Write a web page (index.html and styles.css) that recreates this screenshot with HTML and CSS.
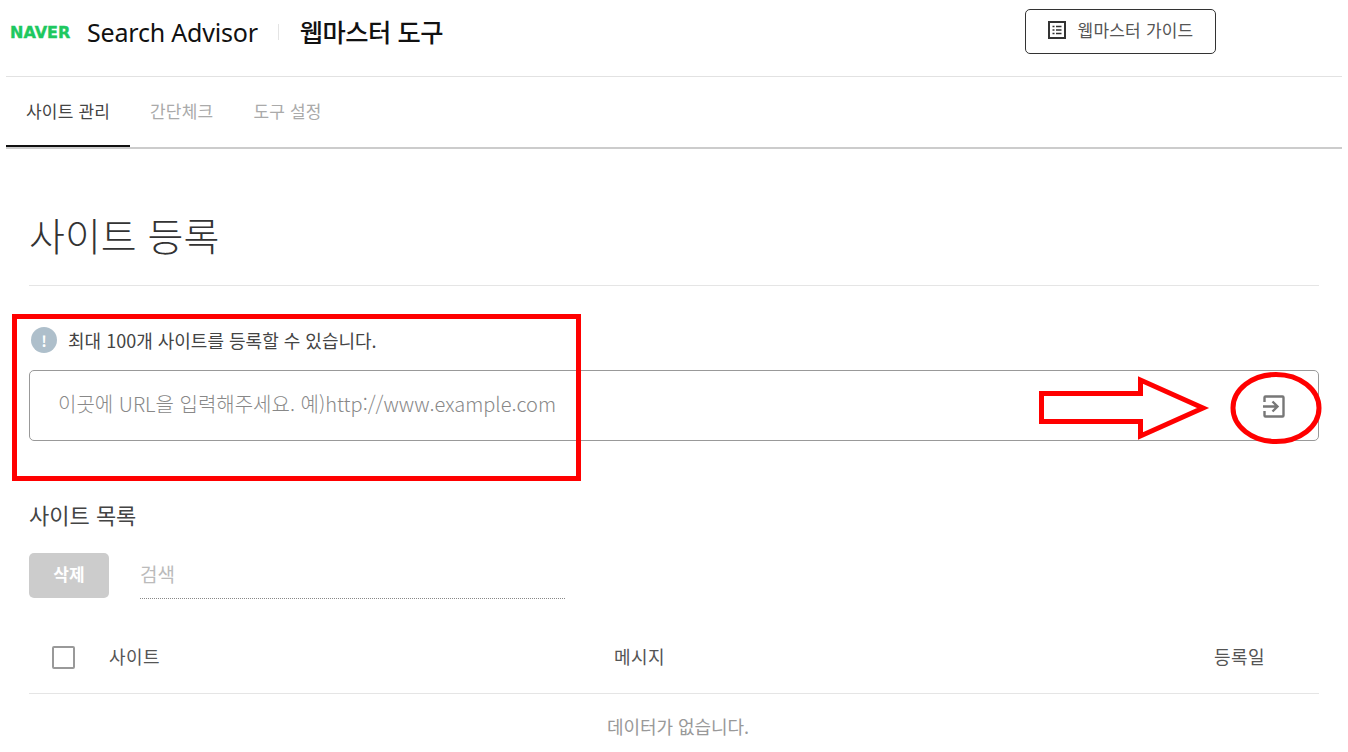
FILE: index.html
```html
<!DOCTYPE html>
<html lang="ko">
<head>
  <meta charset="UTF-8">
  <title>웹마스터 도구</title>
  <link rel="stylesheet" href="styles.css">
</head>
<body>
  <header class="top">
    <div class="brand">
      <span class="naver">NAVER</span>
      <span class="advisor">Search Advisor</span>
      <span class="divider"></span>
      <span class="tool">웹마스터 도구</span>
    </div>
    <a class="guide">
      <svg class="guide-icon" width="18" height="18" viewBox="0 0 18 18">
        <rect x="1" y="1" width="16" height="16" fill="none" stroke="#333" stroke-width="2"/>
        <path d="M4.500 5.500h2M8 5.500h5.500M4.500 9h2M8 9h5.500M4.500 12.500h2M8 12.500h5.500" stroke="#333" stroke-width="1.500"/>
      </svg>
      웹마스터 가이드
    </a>
  </header>

  <nav class="tabs">
    <a class="tab active">사이트 관리</a>
    <a class="tab">간단체크</a>
    <a class="tab">도구 설정</a>
  </nav>

  <main class="content">
    <h1 class="page-title">사이트 등록</h1>

    <p class="notice">
      <span class="notice-icon">!</span>
      최대 100개 사이트를 등록할 수 있습니다.
    </p>

    <div class="url-box">
      <span class="url-hint">이곳에 URL을 입력해주세요. 예)http://www.example.com</span>
      <svg class="url-go" width="24" height="24" viewBox="0 0 24 24">
        <path d="M2.500 7V2.500a1 1 0 0 1 1-1h17a1 1 0 0 1 1 1v18a1 1 0 0 1-1 1h-17a1 1 0 0 1-1-1V16" fill="none" stroke="#777" stroke-width="2.400"/>
        <path d="M1 11.500h14M10.500 6.500l5 5-5 5" fill="none" stroke="#777" stroke-width="2.400"/>
      </svg>
    </div>

    <h2 class="list-title">사이트 목록</h2>

    <div class="list-tools">
      <button class="delete">삭제</button>
      <span class="search">검색</span>
    </div>

    <div class="list-head">
      <span class="check"></span>
      <span class="col-site">사이트</span>
      <span class="col-msg">메시지</span>
      <span class="col-date">등록일</span>
    </div>
    <p class="empty">데이터가 없습니다.</p>
  </main>

  <!-- red marks on top of the page -->
  <div class="mark-box"></div>
  <svg class="mark-arrow" width="176" height="68" viewBox="0 0 176 68">
    <path d="M3.500 18.500H102.500V5L165 33 102.500 61V46.500H3.500Z" fill="#fff" stroke="#f00" stroke-width="5" stroke-miterlimit="10"/>
  </svg>
  <svg class="mark-circle" width="94" height="78" viewBox="0 0 94 78">
    <ellipse cx="47" cy="39" rx="43" ry="33.500" fill="none" stroke="#f00" stroke-width="5"/>
  </svg>
</body>
</html>
```

FILE: styles.css
```css
* {
  box-sizing: border-box;
}

body {
  margin: 0;
  height: 752px;
  overflow: hidden;
  position: relative;
  background: #fff;
  color: #333;
  font-family: "Noto Sans", "Noto Sans CJK KR", sans-serif;
}

.top {
  margin: 0 6px;
  height: 77px;
  border-bottom: 1px solid #e2e2e2;
  position: relative;
  display: flex;
  align-items: flex-start;
}

.brand {
  display: flex;
  align-items: center;
  height: 64px;
  padding-left: 4px;
}

.naver {
  width: 61px;
  color: #1ec85f;
  font-family: "DejaVu Sans", sans-serif;
  font-size: 16px;
  font-weight: 700;
  -webkit-text-stroke: 0.400px #1ec85f;
  white-space: nowrap;
}

.advisor {
  margin-left: 16px;
  color: #111;
  font-size: 25px;
  letter-spacing: -0.200px;
}

.divider {
  width: 1px;
  height: 16px;
  margin: 0 21px 0 20px;
  background: #e4e4e4;
}

.tool {
  margin-bottom: 2px;
  color: #111;
  font-family: "Noto Sans CJK KR", sans-serif;
  font-size: 25.300px;
  font-weight: 500;
  letter-spacing: -0.500px;
}

.guide {
  position: absolute;
  left: 1019px;
  top: 9px;
  width: 191px;
  height: 45px;
  padding-bottom: 4px;
  border: 1px solid #333;
  border-radius: 5px;
  display: flex;
  align-items: center;
  justify-content: center;
  gap: 12px;
  color: #555;
  font-family: "Noto Sans CJK KR", sans-serif;
  font-size: 17px;
  letter-spacing: 0.200px;
}

.guide-icon {
  flex: none;
  margin-top: 1px;
}

.tabs {
  margin: 0 6px;
  height: 72px;
  display: flex;
  border-bottom: 2px solid #ccc;
  font-family: "Noto Sans CJK KR", sans-serif;
  font-size: 17px;
  letter-spacing: 0.200px;
}

.tab {
  height: 70px;
  padding: 0 20px;
  line-height: 68px;
  color: #aaa;
  white-space: nowrap;
}

.active {
  color: #444;
  border-bottom: 2px solid #111;
  width: 124px;
}

.content {
  margin: 0 29px;
  font-family: "Noto Sans CJK KR", sans-serif;
}

.page-title {
  margin: 0;
  height: 137px;
  padding-top: 55px;
  border-bottom: 1px solid #e5e5e5;
  color: #333;
  font-size: 39px;
  font-weight: 300;
  line-height: 60px;
}

.notice {
  margin: 0;
  height: 84px;
  padding: 40px 2px 16px;
  display: flex;
  align-items: center;
  gap: 11px;
  font-size: 18px;
  color: #444;
}

.notice-icon {
  width: 26px;
  height: 26px;
  border-radius: 50%;
  background: #aebfcb;
  color: #fff;
  display: flex;
  align-items: center;
  justify-content: center;
  font-size: 15px;
  font-weight: 700;
}

.url-box {
  height: 71px;
  border: 1px solid #999;
  border-radius: 5px;
  display: flex;
  align-items: center;
  justify-content: space-between;
  padding: 0 32px 0 28px;
}

.url-hint {
  padding-bottom: 5px;
  color: #888;
  font-size: 20px;
  font-weight: 300;
}

.url-go {
  margin-top: 3px;
}

.list-title {
  margin: 57px 0 0;
  color: #444;
  font-size: 22px;
  font-weight: 400;
  line-height: 32px;
}

.list-tools {
  margin-top: 23px;
  display: flex;
  align-items: flex-start;
}

.delete {
  width: 80px;
  height: 45px;
  padding-bottom: 5px;
  border: none;
  border-radius: 5px;
  background: #ccc;
  color: #fff;
  font-family: inherit;
  font-size: 17px;
  font-weight: 700;
}

.search {
  width: 425px;
  height: 46px;
  margin-left: 31px;
  border-bottom: 1px dotted #888;
  color: #bbb;
  font-size: 19px;
  line-height: 42px;
}

.list-head {
  height: 95px;
  border-bottom: 1px solid #e5e5e5;
  display: flex;
  align-items: flex-end;
  padding-bottom: 24px;
  color: #555;
  font-size: 18px;
  letter-spacing: 0.500px;
}

.check {
  width: 23px;
  height: 23px;
  margin-left: 23px;
  border: 2px solid #999;
  border-radius: 2px;
}

.col-site {
  margin-left: 34px;
  width: 505px;
}

.col-msg {
  width: 600px;
}

.col-date {
  width: 60px;
}

.empty {
  margin: 19px 0 0;
  padding-left: 8px;
  text-align: center;
  color: #999;
  font-size: 18px;
  letter-spacing: -0.050px;
}

/* red marks */
.mark-box {
  position: absolute;
  left: 12px;
  top: 314px;
  width: 569px;
  height: 167px;
  border: 5px solid #f00;
}

.mark-arrow {
  position: absolute;
  left: 1038px;
  top: 375px;
}

.mark-circle {
  position: absolute;
  left: 1229px;
  top: 369px;
}
```
